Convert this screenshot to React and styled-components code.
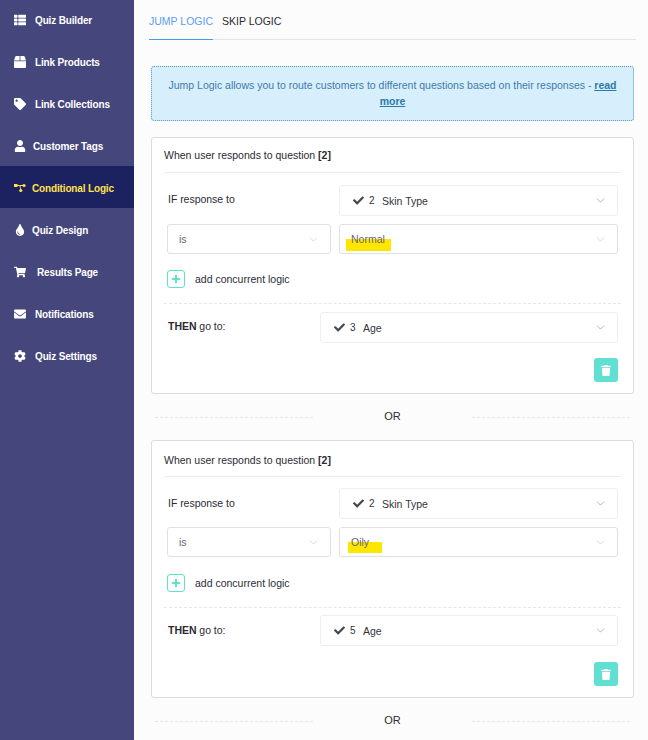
import React from 'react';
import styled, { createGlobalStyle } from 'styled-components';
import { FaThList, FaBox, FaTag, FaUser, FaTint, FaShoppingCart, FaEnvelope, FaCog, FaCheck, FaPlus, FaTrash } from 'react-icons/fa';
import { ChevronDown } from 'lucide-react';

const GlobalStyle = createGlobalStyle`
	html, body {
		margin: 0;
		padding: 0;
		background: #fcfcfc;
		font-family: 'Liberation Sans', Arial, sans-serif;
		font-size: 10.5px;
		color: #2b2b33;
	}
	* {
		box-sizing: border-box;
	}
`;

const Page = styled.div`
	display: grid;
	grid-template-columns: 134px 1fr;
	height: 740px;
	overflow: hidden;
`;

const Sidebar = styled.nav`
	background-color: #45467c;
	display: flex;
	flex-direction: column;
`;

const NavList = styled.div`
	display: flex;
	flex-direction: column;
	margin-top: -2px;
`;

const NavItem = styled.div`
	display: flex;
	align-items: center;
	height: 42px;
	padding: 2px 0 0 14px;
	gap: ${(p) => p.$gap}px;
	color: ${(p) => (p.$active ? '#ffe14d' : '#fff')};
	background-color: ${(p) => (p.$active ? '#1c2260' : 'transparent')};
	font-size: 10px;
	font-weight: 700;
	letter-spacing: -0.15px;

	svg {
		width: 12px;
		height: 12px;
		flex: none;
	}
`;

const Main = styled.main`
	padding: 0 12px 0 15px;
`;

const Tabs = styled.div`
	display: flex;
	gap: 9px;
	height: 40px;
	border-bottom: 1px solid #e4e4e8;
`;

const Tab = styled.div`
	height: 40px;
	padding-top: 15px;
	font-size: 10.5px;
	line-height: 13px;
	color: ${(p) => (p.$active ? '#5b9cf5' : '#2b2b33')};
	border-bottom: ${(p) => (p.$active ? '1px solid #4a97ee' : 'none')};
`;

const Notice = styled.div`
	margin: 26px 2px 16px 2px;
	height: 55px;
	padding: 10px 16px;
	background-color: #d7eefc;
	border: 1px dotted #4f97c7;
	border-radius: 3px;
	text-align: center;
	color: #3f7cab;
	font-size: 10.5px;
	line-height: 16px;

	a {
		color: #2c7aa8;
		font-weight: 700;
		text-decoration: underline;
	}
`;

const Card = styled.section`
	margin: 0 2px;
	height: ${(p) => (p.$tall ? 258 : 257)}px;
	padding: 0 12px;
	background-color: #fff;
	border: 1px solid #dcdcdf;
	border-radius: 3px;
`;

const CardTitle = styled.div`
	height: ${(p) => (p.$tall ? 36 : 35)}px;
	padding-top: ${(p) => (p.$tall ? 13 : 11)}px;
	line-height: 13px;
	font-size: 10.5px;
	border-bottom: 1px solid #ececee;

	b {
		font-weight: 700;
	}
`;

const Row = styled.div`
	display: grid;
	grid-template-columns: ${(p) => p.$columns};
	gap: 8px;
	align-items: center;
	padding: 0 3px;
	margin-top: ${(p) => p.$top}px;
`;

const Label = styled.div`
	padding-left: 1px;
	padding-bottom: ${(p) => (p.$tall ? 2 : 4)}px;
	font-size: 10.5px;
	letter-spacing: -0.03px;

	b {
		font-weight: 700;
	}
`;

const Select = styled.div`
	display: flex;
	align-items: center;
	height: ${(p) => p.$height}px;
	padding: 0 10px 0 ${(p) => p.$left}px;
	background-color: #fff;
	border: 1px solid ${(p) => (p.$strong ? '#dfe0e6' : '#eeeef0')};
	border-radius: 3px;
	font-size: 10.5px;
	color: ${(p) => (p.$muted ? '#66666f' : '#33333b')};

	> svg:last-child {
		margin-left: auto;
		width: 13px;
		height: 13px;
		color: ${(p) => (p.$strong ? '#c4c5cc' : '#8e8e96')};
	}
`;

const Check = styled(FaCheck)`
	width: 11px;
	height: 11px;
	color: #45454c;
	flex: none;
`;

const Number = styled.span`
	margin-left: 5px;
	width: 13px;
	font-size: 10px;
	flex: none;
`;

const Highlight = styled.span`
	display: inline-block;
	width: ${(p) => p.$width}px;
	height: 24px;
	margin-left: -${(p) => p.$lead}px;
	padding-left: ${(p) => p.$lead}px;
	line-height: 24px;
	background: linear-gradient(transparent 12px, #ffe600 12px, #ffe600 23.5px, transparent 23.5px);
`;

const AddRow = styled.div`
	display: flex;
	align-items: center;
	gap: 10px;
	margin: ${(p) => (p.$tall ? 17 : 16)}px 0 0 3px;
	height: 18px;
`;

const AddButton = styled.div`
	display: flex;
	align-items: center;
	justify-content: center;
	width: 18px;
	height: 18px;
	border: 1px solid #62dfd3;
	border-radius: 3px;
	color: #62dfd3;

	svg {
		width: 10px;
		height: 10px;
	}
`;

const Dashed = styled.div`
	margin-top: 15px;
	border-top: 1px dashed #e6e6e8;
`;

const Footer = styled.div`
	display: flex;
	justify-content: flex-end;
	margin: ${(p) => (p.$tall ? 16 : 15)}px 3px 0 0;
`;

const TrashButton = styled.div`
	display: flex;
	align-items: center;
	justify-content: center;
	width: 24px;
	height: 24px;
	border-radius: 3px;
	background-color: #62dfd3;
	color: #fff;

	svg {
		width: 10px;
		height: 11px;
	}
`;

const OrRow = styled.div`
	display: grid;
	grid-template-columns: 158px 1fr 158px;
	align-items: center;
	height: 46px;
	margin: 0 6px;
	text-align: center;
	font-size: 11px;

	i {
		border-top: 1px dashed #e8e8ea;
	}

	span {
		padding-bottom: 2px;
	}
`;

const LogicIcon = () => (
	<svg viewBox="0 0 12 12" fill="none">
		<path d="M2 3.5h3.5c.8 0 .8 4 1.5 4M5.5 3.5h4" stroke="currentColor" strokeWidth="1" />
		<rect x="0" y="2" width="3.5" height="3" fill="currentColor" />
		<circle cx="10" cy="3.5" r="1.6" fill="currentColor" />
		<circle cx="6.8" cy="8.5" r="1.6" fill="currentColor" />
	</svg>
);

const navItems = [
	{ label: 'Quiz Builder', icon: <FaThList />, gap: 9 },
	{ label: 'Link Products', icon: <FaBox />, gap: 9 },
	{ label: 'Link Collections', icon: <FaTag />, gap: 9 },
	{ label: 'Customer Tags', icon: <FaUser />, gap: 7 },
	{ label: 'Conditional Logic', icon: <LogicIcon />, gap: 6, active: true },
	{ label: 'Quiz Design', icon: <FaTint />, gap: 6 },
	{ label: 'Results Page', icon: <FaShoppingCart />, gap: 11 },
	{ label: 'Notifications', icon: <FaEnvelope />, gap: 9 },
	{ label: 'Quiz Settings', icon: <FaCog />, gap: 9 },
];

const LogicCard = ({ answer, lead, width, target, tall }) => (
	<Card $tall={tall}>
		<CardTitle $tall={tall}>
			When user responds to question <b>[2]</b>
		</CardTitle>
		<Row $columns="164px 279px" $top={tall ? 11 : 12}>
			<Label $tall={tall}>IF response to</Label>
			<Select $height={31} $left={13}>
				<Check />
				<Number>2</Number>
				<span>Skin Type</span>
				<ChevronDown strokeWidth={1.2} />
			</Select>
		</Row>
		<Row $columns="164px 279px" $top={8}>
			<Select $height={30} $left={11} $strong $muted>
				<span>is</span>
				<ChevronDown strokeWidth={1.2} />
			</Select>
			<Select $height={30} $left={11} $strong $muted>
				<Highlight $lead={lead} $width={width}>{answer}</Highlight>
				<ChevronDown strokeWidth={1.2} />
			</Select>
		</Row>
		<AddRow $tall={tall}>
			<AddButton>
				<FaPlus />
			</AddButton>
			<span>add concurrent logic</span>
		</AddRow>
		<Dashed />
		<Row $columns="145px 298px" $top={tall ? 7 : 8}>
			<Label $tall={tall}>
				<b>THEN</b> go to:
			</Label>
			<Select $height={31} $left={13}>
				<Check />
				<Number>{target}</Number>
				<span>Age</span>
				<ChevronDown strokeWidth={1.2} />
			</Select>
		</Row>
		<Footer $tall={tall}>
			<TrashButton>
				<FaTrash />
			</TrashButton>
		</Footer>
	</Card>
);

const Or = () => (
	<OrRow>
		<i />
		<span>OR</span>
		<i />
	</OrRow>
);

const App = () => {
	return (
		<Page>
			<GlobalStyle />
			<Sidebar>
				<NavList>
					{navItems.map((item) => (
						<NavItem key={item.label} $gap={item.gap} $active={item.active}>
							{item.icon}
							<span>{item.label}</span>
						</NavItem>
					))}
				</NavList>
			</Sidebar>
			<Main>
				<Tabs>
					<Tab $active>JUMP LOGIC</Tab>
					<Tab>SKIP LOGIC</Tab>
				</Tabs>
				<Notice>
					Jump Logic allows you to route customers to different questions based on their responses - <a>read</a> <a>more</a>
				</Notice>
				<LogicCard answer="Normal" lead={5} width={45} target={3} />
				<Or />
				<LogicCard answer="Oily" lead={3} width={34} target={5} tall />
				<Or />
			</Main>
		</Page>
	);
};

export default App;
